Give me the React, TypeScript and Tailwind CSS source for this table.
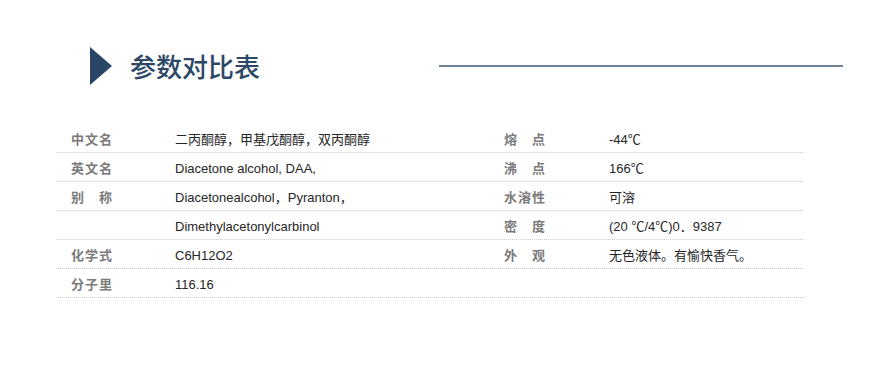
const rows: [string, string, string, string][] = [
  ["中文名", "二丙酮醇，甲基戊酮醇，双丙酮醇", "熔点", "-44℃"],
  ["英文名", "Diacetone alcohol, DAA,", "沸点", "166℃"],
  ["别称", "Diacetonealcohol，Pyranton，", "水溶性", "可溶"],
  ["", "Dimethylacetonylcarbinol", "密度", "(20 ℃/4℃)0．9387"],
  ["化学式", "C6H12O2", "外观", "无色液体。有愉快香气。"],
  ["分子里", "116.16", "", ""],
];

const Label = ({ text }: { text: string }) => (
  <div className="flex w-[41px] justify-between text-[13px] font-semibold text-[#7b7b7b]">
    {text.split("").map((c, i) => (
      <span key={i}>{c}</span>
    ))}
  </div>
);

export default function App() {
  return (
    <div
      className="w-[886px] h-[367px] bg-white"
      style={{ fontFamily: '"Liberation Sans", Arial, "Noto Sans CJK SC", sans-serif' }}
    >
      <div className="flex items-center pt-[47px] pl-[90px] pr-[43px]">
        <div className="w-0 h-0 border-l-[22px] border-y-[19px] border-y-transparent border-l-[#2a4666]" />
        <div
          className="ml-[18px] text-[26px] leading-[38px] font-medium text-[#2c4866]"
          style={{ fontFamily: '"Noto Sans CJK SC", sans-serif' }}
        >
          参数对比表
        </div>
        <div className="ml-auto w-[404px] h-[2px] bg-[#6b8399]" />
      </div>

      <div className="mt-[39px] ml-[56px] w-[747px]">
        {rows.map((r, i) => (
          <div key={i} className="flex items-center h-[29px] pt-[4px] border-b border-dotted border-[#c9c9c9]">
            <div className="w-[119px] pl-[15px]">{r[0] && <Label text={r[0]} />}</div>
            <div className="w-[314px] text-[13px] text-[#262626]">{r[1]}</div>
            <div className="w-[120px] pl-[15px]">{r[2] && <Label text={r[2]} />}</div>
            <div className="flex-1 text-[13px] text-[#262626]">{r[3]}</div>
          </div>
        ))}
      </div>
    </div>
  );
}
